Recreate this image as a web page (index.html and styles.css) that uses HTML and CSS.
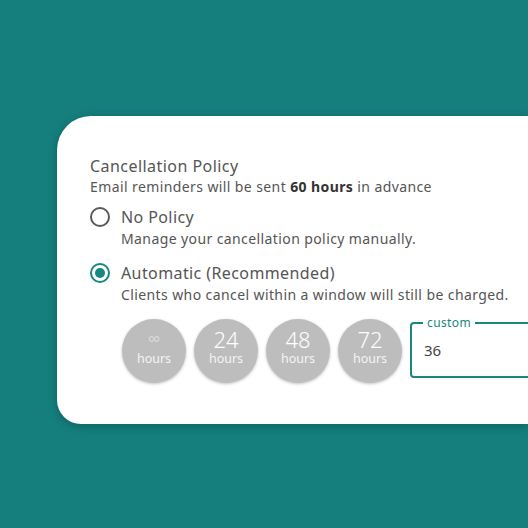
FILE: index.html
```html
<!DOCTYPE html>
<html lang="en">
<head>
    <meta charset="UTF-8">
    <title>Cancellation Policy</title>
    <link rel="stylesheet" href="styles.css">
</head>
<body>
    <div class="policy-card">
        <h2 class="policy-title">Cancellation Policy</h2>
        <p class="policy-sub">Email reminders will be sent <strong>60 hours</strong> in advance</p>

        <label class="option">
            <span class="radio"></span>
            <span class="option-text">
                <span class="option-name">No Policy</span>
                <span class="option-desc">Manage your cancellation policy manually.</span>
            </span>
        </label>

        <label class="option">
            <span class="radio checked"></span>
            <span class="option-text">
                <span class="option-name">Automatic (Recommended)</span>
                <span class="option-desc">Clients who cancel within a window will still be charged.</span>
            </span>
        </label>

        <div class="windows">
            <div class="chip"><span class="chip-num inf">∞</span><span class="chip-unit">hours</span></div>
            <div class="chip"><span class="chip-num">24</span><span class="chip-unit">hours</span></div>
            <div class="chip"><span class="chip-num">48</span><span class="chip-unit">hours</span></div>
            <div class="chip"><span class="chip-num">72</span><span class="chip-unit">hours</span></div>
            <fieldset class="custom">
                <legend>custom</legend>
                <span class="custom-value">36</span>
            </fieldset>
        </div>
    </div>
</body>
</html>
```

FILE: styles.css
```css
* {
    margin: 0;
    padding: 0;
    box-sizing: border-box;
}

body {
    font-family: 'Noto Sans', 'Open Sans', sans-serif;
    background: #147f7d;
    width: 528px;
    height: 528px;
    overflow: hidden;
    padding: 116px 0 0 57px;
}

.policy-card {
    width: 471px;
    height: 308px;
    background: #fff;
    border-radius: 34px 0 0 24px;
    box-shadow: 0 2px 10px rgba(0, 0, 0, 0.25);
    padding: 39px 0 0 33px;
    color: #555;
    letter-spacing: 0.4px;
    overflow: hidden;
}

.policy-title {
    font-size: 16px;
    font-weight: 400;
    line-height: 22px;
    letter-spacing: 0.45px;
    color: #555;
}

.policy-sub {
    font-size: 14px;
    line-height: 20px;
    color: #555;
}

.policy-sub strong {
    color: #333;
    font-weight: 700;
}

.option {
    display: flex;
    align-items: flex-start;
    gap: 11px;
    margin-top: 9px;
}

.option + .option {
    margin-top: 12px;
}

.radio {
    width: 20px;
    height: 20px;
    border: 2px solid #5a5a5a;
    border-radius: 50%;
    margin-top: 1px;
    flex-shrink: 0;
    display: flex;
    align-items: center;
    justify-content: center;
}

.radio.checked {
    border-color: #17877f;
}

.radio.checked::after {
    content: '';
    width: 10px;
    height: 10px;
    border-radius: 50%;
    background: #17877f;
}

.option-text {
    display: flex;
    flex-direction: column;
}

.option-name {
    font-size: 16px;
    line-height: 22px;
    color: #555;
}

.option-desc {
    font-size: 14px;
    line-height: 22px;
    color: #555;
}

.windows {
    display: flex;
    align-items: flex-start;
    gap: 8px;
    margin-top: 13px;
    margin-left: 32px;
    letter-spacing: 0;
}

.chip {
    width: 64px;
    height: 64px;
    flex-shrink: 0;
    border-radius: 50%;
    background: #bdbdbd;
    box-shadow: 0 1px 3px rgba(0, 0, 0, 0.25);
    color: #fff;
    display: flex;
    flex-direction: column;
    align-items: center;
    justify-content: center;
    padding-bottom: 8px;
}

.chip-num {
    font-size: 22px;
    line-height: 22px;
    font-weight: 300;
}

.chip-num.inf {
    font-size: 17px;
    color: #e8e8e8;
}

.chip-unit {
    font-size: 12.5px;
    line-height: 14px;
    margin-top: 2px;
    color: #f4f4f4;
}

.custom {
    width: 140px;
    height: 61px;
    flex-shrink: 0;
    margin-top: -2px;
    border: 2px solid #17877f;
    border-radius: 4px;
    padding: 0 12px;
}

.custom legend {
    font-size: 12px;
    line-height: 12px;
    color: #17877f;
    padding: 0 4px;
    margin-left: -1px;
    letter-spacing: 0.4px;
}

.custom-value {
    display: block;
    font-size: 15px;
    color: #444;
    margin-top: 11px;
}
```
